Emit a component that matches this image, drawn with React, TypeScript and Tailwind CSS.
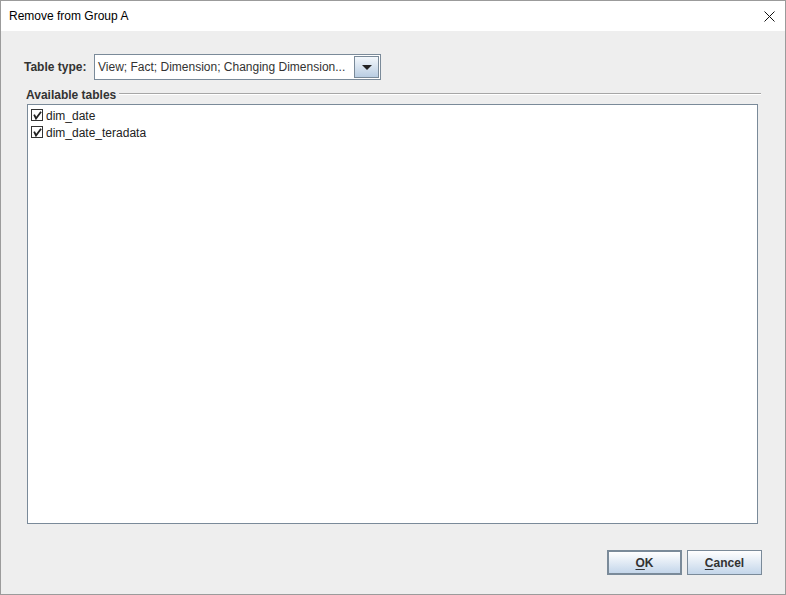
import React from 'react';

const FONT = "font-['Liberation_Sans',Arial,sans-serif]";

const CheckBox: React.FC = () => (
  <svg width="13" height="13" viewBox="0 0 13 13" className="shrink-0">
    <rect x="0.5" y="0.5" width="11" height="11" fill="#ffffff" stroke="#333333" />
    <path d="M12.5 1 V12.5 H1" fill="none" stroke="#ffffff" />
    <path d="M3.5 6.5 L5 9.5 L9.5 3.5" fill="none" stroke="#222222" strokeWidth="1.8" strokeLinecap="square" />
  </svg>
);

const TableRow: React.FC<{ name: string }> = ({ name }) => (
  <div className="flex items-center h-[17px] gap-[2px]">
    <CheckBox />
    <span className="text-[12px] text-[#222222]">{name}</span>
  </div>
);

const App: React.FC = () => {
  const tables = ['dim_date', 'dim_date_teradata'];

  return (
    <div className={`w-[786px] h-[595px] border border-[#9b9b9b] bg-[#eeeeee] flex flex-col ${FONT}`}>
      {/* title bar */}
      <div className="h-[30px] bg-white flex items-center justify-between pl-[8px] pr-[10px]">
        <span className="text-[12px] text-black">Remove from Group A</span>
        <svg width="11" height="11" viewBox="0 0 11 11">
          <path d="M0.5 0.5 L10.5 10.5 M10.5 0.5 L0.5 10.5" stroke="#111111" strokeWidth="1" />
        </svg>
      </div>

      <div className="flex-1 flex flex-col pt-[23px] pb-[19px] pl-[23px] pr-[22px]">
        {/* table type */}
        <div className="flex items-center h-[26px]">
          <span className="text-[12px] font-bold text-[#333333] w-[70px]">Table type:</span>
          <div className="flex h-[26px] w-[287px] border border-[#7a8a99] bg-white">
            <div className="flex-1 flex items-center pl-[3px] text-[12px] text-[#333333] whitespace-nowrap overflow-hidden">
              View; Fact; Dimension; Changing Dimension...
            </div>
            <div className="w-[25px] m-[1px] border border-[#7a8a99] bg-gradient-to-b from-[#f4f8fc] to-[#b9cde2] flex items-center justify-center">
              <svg width="10" height="5" viewBox="0 0 10 5">
                <path d="M0 0 H10 L5 5 Z" fill="#222222" />
              </svg>
            </div>
          </div>
        </div>

        {/* available tables */}
        <div className="mt-[8px] flex-1 flex flex-col">
          <div className="flex items-center h-[14px] pl-[2px] gap-[3px] mr-[2px]">
            <span className="text-[12px] font-bold text-[#333333] leading-none">Available tables</span>
            <div className="flex-1 border-t border-[#a6a6a6] border-b-white border-b h-[2px] mt-[-3px]" />
          </div>
          <div className="mt-[2px] flex-1 ml-[3px] mr-[5px] border border-[#7a8a99] bg-white px-[3px] pt-[2px]">
            {tables.map(t => (
              <TableRow key={t} name={t} />
            ))}
          </div>
        </div>

        {/* buttons */}
        <div className="mt-[26px] flex justify-end gap-[5px] h-[25px] mr-[1px]">
          <button className="w-[75px] h-[25px] border-2 border-[#7a8a99] bg-gradient-to-b from-[#ffffff] to-[#c4d6ea] text-[12px] font-bold text-[#333333]">
            <span className="underline underline-offset-2">O</span>K
          </button>
          <button className="w-[75px] h-[25px] border border-[#7a8a99] bg-gradient-to-b from-[#ffffff] to-[#c4d6ea] text-[12px] font-bold text-[#333333]">
            <span className="underline underline-offset-2">C</span>ancel
          </button>
        </div>
      </div>
    </div>
  );
};

export default App;
